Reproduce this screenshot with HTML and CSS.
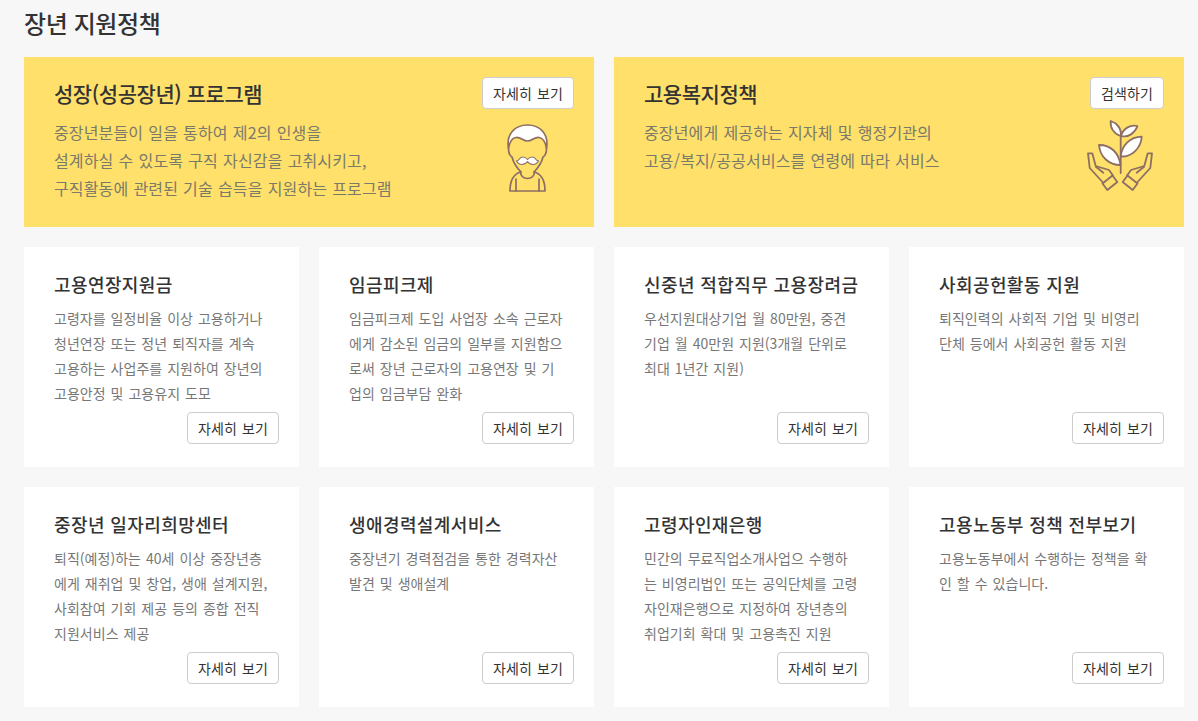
FILE: index.html
```html
<!DOCTYPE html>
<html lang="ko">
<head>
    <meta charset="UTF-8">
    <title>장년 지원정책</title>
    <link rel="stylesheet" href="styles.css">
</head>
<body>
<div class="page">
    <h2 class="page-title">장년 지원정책</h2>
    <div class="grid">
        <div class="hero">
            <h3>성장(성공장년) 프로그램</h3>
            <p>중장년분들이 일을 통하여 제2의 인생을<br>설계하실 수 있도록 구직 자신감을 고취시키고,<br>구직활동에 관련된 기술 습득을 지원하는 프로그램</p>
            <div class="hero-side">
                <a class="btn" href="#">자세히 보기</a>
                <svg class="icon-person" width="41" height="68" viewBox="0 0 41 68" fill="none" stroke="#8d6e63" stroke-width="1.700" stroke-linejoin="round" stroke-linecap="round">
                    <path fill="#fff" d="M1.500 24C-1 10 8 1 20.500 1S42 10 39.500 24C38.500 19 36 14 32 13.500C27 13 25 17 20.500 17C16 17 14 13 9 13.500C5 14 2.500 19 1.500 24z"/>
                    <path d="M1.500 24C1.500 29 3 32 5 33C7 41 11 45 14 48M39.500 24C39.500 29 38 32 36 33C34 41 30 45 27 48"/>
                    <path fill="#fff" stroke-width="1.100" d="M20.500 35.500C19 33.500 17.500 33 15.500 33C13.500 33 12.500 34.500 11.500 36C11 36.800 10.500 37 9.500 36.800C10.500 39 12.500 40.500 15 40.500C17 40.500 19 39.500 20.500 37.500C22 39.500 24 40.500 26 40.500C28.500 40.500 30.500 39 31.500 36.800C30.500 37 30 36.800 29.500 36C28.500 34.500 27.500 33 25.500 33C23.500 33 22 33.500 20.500 35.500z"/>
                    <path d="M13.500 47.500C13.500 52 16.500 54.500 20.500 54.500S27.500 52 27.500 47.500"/>
                    <path d="M13.500 48C7 50 3 56 3 67H38C38 56 34 50 27.500 48"/>
                    <path d="M9 55V67M32 55V67"/>
                </svg>
            </div>
        </div>
        <div class="hero">
            <h3>고용복지정책</h3>
            <p>중장년에게 제공하는 지자체 및 행정기관의<br>고용/복지/공공서비스를 연령에 따라 서비스</p>
            <div class="hero-side">
                <a class="btn" href="#">검색하기</a>
                <svg class="icon-hands" width="67" height="72" viewBox="0 0 67 72" fill="none" stroke="#8d6e63" stroke-width="1.800" stroke-linejoin="round" stroke-linecap="round">
                    <path d="M33.700 14V53"/>
                    <path fill="#fff" d="M33.700 16C27 14 23 8 23.700 1C30 3 35 9 33.700 16z"/>
                    <path fill="#fff" d="M34 16C36 9 43 4 50.500 6C48 13 41 18 34 16z"/>
                    <path fill="#fff" d="M33.700 36.500C35 25 43 17 54.700 16.700C54 28 45 37 33.700 36.500z"/>
                    <path fill="#fff" d="M33.500 45C22 45 13 37 12 25C24 25 32 33 33.500 45z"/>
                    <g>
                        <path d="M15.500 62L2.700 48L1 33.300H5.300L8.700 46L22 50L26 55.500"/>
                        <path d="M9 47C12 49 14 51 16.300 52.700"/>
                        <path d="M15.500 63.500L20.300 70L30.300 62L25.500 55.500z"/>
                    </g>
                    <g transform="matrix(-1 0 0 1 66 0)">
                        <path d="M15.500 62L2.700 48L1 33.300H5.300L8.700 46L22 50L26 55.500"/>
                        <path d="M9 47C12 49 14 51 16.300 52.700"/>
                        <path d="M15.500 63.500L20.300 70L30.300 62L25.500 55.500z"/>
                    </g>
                </svg>
            </div>
        </div>

        <div class="card">
            <h4>고용연장지원금</h4>
            <p>고령자를 일정비율 이상 고용하거나<br>청년연장 또는 정년 퇴직자를 계속<br>고용하는 사업주를 지원하여 장년의<br>고용안정 및 고용유지 도모</p>
            <a class="btn" href="#">자세히 보기</a>
        </div>
        <div class="card">
            <h4>임금피크제</h4>
            <p>임금피크제 도입 사업장 소속 근로자<br>에게 감소된 임금의 일부를 지원함으<br>로써 장년 근로자의 고용연장 및 기<br>업의 임금부담 완화</p>
            <a class="btn" href="#">자세히 보기</a>
        </div>
        <div class="card">
            <h4>신중년 적합직무 고용장려금</h4>
            <p>우선지원대상기업 월 80만원, 중견<br>기업 월 40만원 지원(3개월 단위로<br>최대 1년간 지원)</p>
            <a class="btn" href="#">자세히 보기</a>
        </div>
        <div class="card">
            <h4>사회공헌활동 지원</h4>
            <p>퇴직인력의 사회적 기업 및 비영리<br>단체 등에서 사회공헌 활동 지원</p>
            <a class="btn" href="#">자세히 보기</a>
        </div>

        <div class="card">
            <h4>중장년 일자리희망센터</h4>
            <p>퇴직(예정)하는 40세 이상 중장년층<br>에게 재취업 및 창업, 생애 설계지원,<br>사회참여 기회 제공 등의 종합 전직<br>지원서비스 제공</p>
            <a class="btn" href="#">자세히 보기</a>
        </div>
        <div class="card">
            <h4>생애경력설계서비스</h4>
            <p>중장년기 경력점검을 통한 경력자산<br>발견 및 생애설계</p>
            <a class="btn" href="#">자세히 보기</a>
        </div>
        <div class="card">
            <h4>고령자인재은행</h4>
            <p>민간의 무료직업소개사업으 수행하<br>는 비영리법인 또는 공익단체를 고령<br>자인재은행으로 지정하여 장년층의<br>취업기회 확대 및 고용촉진 지원</p>
            <a class="btn" href="#">자세히 보기</a>
        </div>
        <div class="card">
            <h4>고용노동부 정책 전부보기</h4>
            <p>고용노동부에서 수행하는 정책을 확<br>인 할 수 있습니다.</p>
            <a class="btn" href="#">자세히 보기</a>
        </div>
    </div>
</div>
</body>
</html>
```

FILE: styles.css
```css
* {
    box-sizing: border-box;
}
body {
    font-family: "Noto Sans CJK KR", "Noto Sans", sans-serif;
    background-color: #f7f7f7;
    margin: 0;
    padding: 0;
    color: #333;
}
.page {
    padding: 0 14px 0 24px;
}
.page-title {
    font-size: 24px;
    font-weight: 500;
    letter-spacing: -0.4px;
    line-height: 32px;
    margin: 0;
    padding: 7px 0 18px;
    color: #333;
}
.grid {
    display: grid;
    grid-template-columns: repeat(4, 275px);
    grid-template-rows: 170px 220px 220px;
    gap: 20px;
}
.hero {
    grid-column: span 2;
    background-color: #ffe06b;
    padding: 21px 20px 0 30px;
    position: relative;
    display: flex;
    flex-wrap: wrap;
    align-content: flex-start;
}
.hero h3 {
    font-size: 21px;
    font-weight: 500;
    letter-spacing: -0.45px;
    line-height: 30px;
    margin: 0 0 10px;
    width: 100%;
    color: #333;
}
.hero p {
    font-size: 16px;
    letter-spacing: 0.14px;
    word-spacing: 0.5px;
    line-height: 28px;
    margin: 0;
    color: #7a7a6a;
}
.hero-side {
    position: absolute;
    top: 20px;
    right: 20px;
    display: flex;
    flex-direction: column;
    align-items: flex-end;
}
.icon-person {
    margin: 15px 26px 0 0;
}
.icon-hands {
    margin: 11px 10px 0 0;
}
.card {
    background-color: #fff;
    padding: 22px 20px 0 30px;
    position: relative;
}
.card h4 {
    font-size: 18px;
    font-weight: 500;
    letter-spacing: 0.4px;
    line-height: 30px;
    margin: 0 0 7px;
    color: #333;
}
.card p {
    font-size: 14px;
    letter-spacing: 0.03px;
    word-spacing: 1px;
    line-height: 25px;
    margin: 0;
    color: #777;
}
.card .btn {
    position: absolute;
    right: 20px;
    bottom: 23px;
}
.btn {
    display: block;
    height: 32px;
    line-height: 30px;
    padding: 0 10px;
    font-size: 14px;
    letter-spacing: 0.12px;
    word-spacing: 1px;
    color: #333;
    background-color: #fff;
    border: 1px solid #ccc;
    border-radius: 4px;
    text-decoration: none;
    white-space: nowrap;
}
```
